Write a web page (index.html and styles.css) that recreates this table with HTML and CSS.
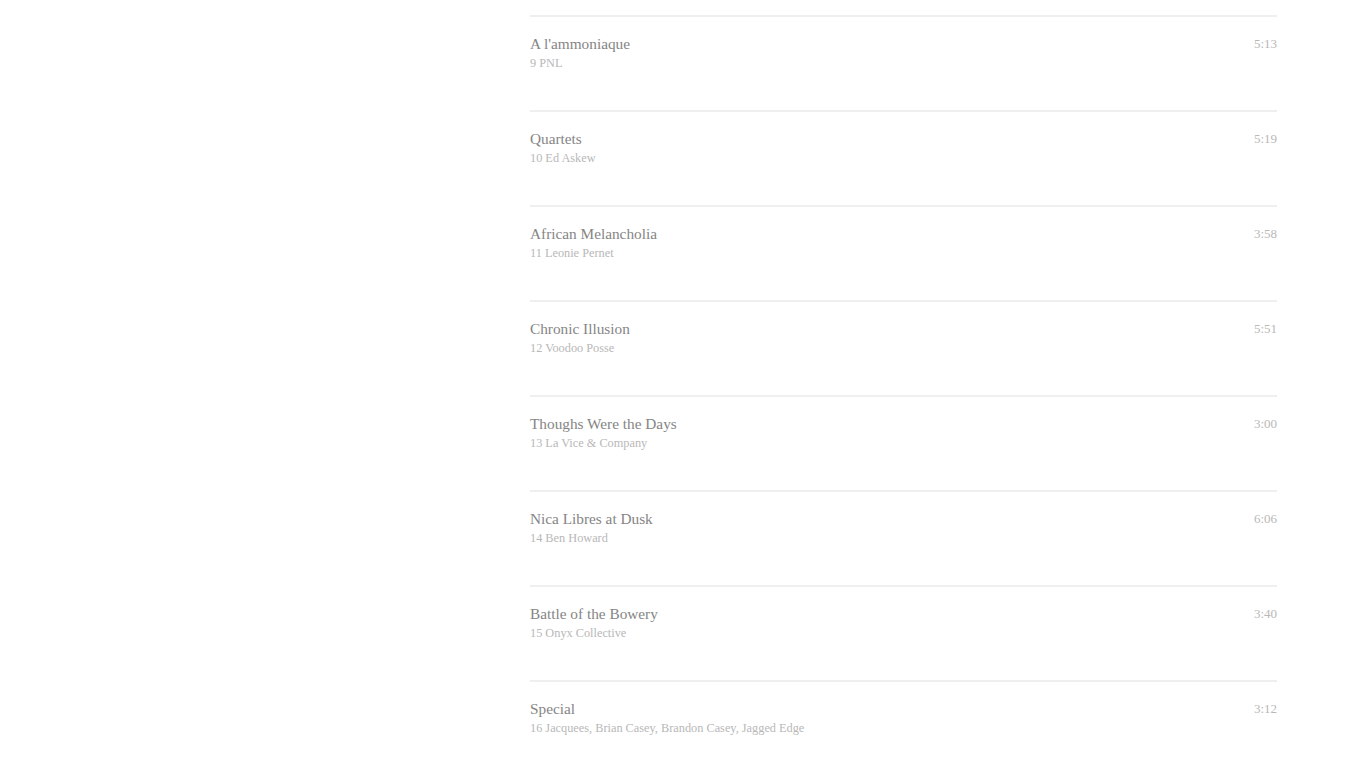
FILE: index.html
```html
<!DOCTYPE html>
<html>
<head>
<meta charset="utf-8">
<link rel="stylesheet" href="styles.css">
</head>
<body>
<ul class="tracks">
  <li class="track"><div class="info"><div class="title">A l'ammoniaque</div><div class="sub">9 PNL</div></div><div class="dur">5:13</div></li>
  <li class="track"><div class="info"><div class="title">Quartets</div><div class="sub">10 Ed Askew</div></div><div class="dur">5:19</div></li>
  <li class="track"><div class="info"><div class="title">African Melancholia</div><div class="sub">11 Leonie Pernet</div></div><div class="dur">3:58</div></li>
  <li class="track"><div class="info"><div class="title">Chronic Illusion</div><div class="sub">12 Voodoo Posse</div></div><div class="dur">5:51</div></li>
  <li class="track"><div class="info"><div class="title">Thoughs Were the Days</div><div class="sub">13 La Vice &amp; Company</div></div><div class="dur">3:00</div></li>
  <li class="track"><div class="info"><div class="title">Nica Libres at Dusk</div><div class="sub">14 Ben Howard</div></div><div class="dur">6:06</div></li>
  <li class="track"><div class="info"><div class="title">Battle of the Bowery</div><div class="sub">15 Onyx Collective</div></div><div class="dur">3:40</div></li>
  <li class="track"><div class="info"><div class="title">Special</div><div class="sub">16 Jacquees, Brian Casey, Brandon Casey, Jagged Edge</div></div><div class="dur">3:12</div></li>
</ul>
</body>
</html>
```
FILE: styles.css
```css
html, body {
  margin: 0;
  padding: 0;
  background: #fff;
  overflow: hidden;
}
body {
  font-family: "Liberation Serif", "DejaVu Serif", serif;
}
.tracks {
  list-style: none;
  margin: 0 0 0 530px;
  padding: 15px 0 0;
  width: 747px;
}
.track {
  display: flex;
  justify-content: space-between;
  align-items: flex-start;
  border-top: 2px solid #efefef;
  height: 95px;
  box-sizing: border-box;
  padding-top: 17px;
}
.title {
  font-size: 15.3px;
  line-height: 20px;
  color: #858585;
}
.sub {
  font-size: 12.3px;
  line-height: 18px;
  color: #b8b8b8;
}
.dur {
  font-size: 13px;
  line-height: 20px;
  color: #b8b8b8;
}
```
